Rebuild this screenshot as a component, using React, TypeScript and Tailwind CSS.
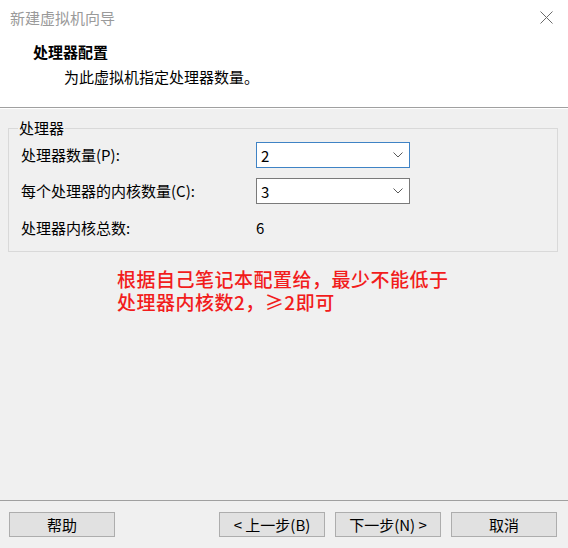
import React from "react";

function Chevron() {
  return (
    <svg width="10" height="6" viewBox="0 0 10 6" className="shrink-0">
      <path d="M0.5 0.5 L5 5 L9.5 0.5" fill="none" stroke="#5a5a5a" strokeWidth="1" />
    </svg>
  );
}

function Combo({ value, focused }: { value: string; focused?: boolean }) {
  return (
    <div
      className={`h-[26px] w-[154px] bg-white border flex items-center justify-between pl-[4px] pr-[6px] ${
        focused ? "border-[#3f83c5]" : "border-[#7a7a7a]"
      }`}
    >
      <span className="text-[15px] leading-none text-black">{value}</span>
      <Chevron />
    </div>
  );
}

function Btn({ children }: { children: React.ReactNode }) {
  return (
    <div className="h-[25px] w-[106px] bg-[#e1e1e1] border border-[#adadad] flex items-center justify-center text-[15px] text-black leading-none">
      {children}
    </div>
  );
}

export default function App() {
  return (
    <div
      className="w-[568px] h-[548px] flex flex-col bg-[#f0f0f0] overflow-hidden"
      style={{ fontFamily: '"Noto Sans CJK SC", sans-serif' }}
    >
      {/* title bar */}
      <div className="h-[34px] bg-white flex items-center justify-between pl-[10px] pr-[15px]">
        <span className="text-[15px] text-[#9a9a9a] leading-none">新建虚拟机向导</span>
        <svg width="13" height="13" viewBox="0 0 13 13">
          <path d="M0.5 0.5 L12.5 12.5 M12.5 0.5 L0.5 12.5" stroke="#6b6b6b" strokeWidth="1" fill="none" />
        </svg>
      </div>

      {/* header */}
      <div className="h-[73px] bg-white flex flex-col pt-[8px] pl-[33px]">
        <div className="text-[15px] font-bold leading-[20px] text-black">处理器配置</div>
        <div className="mt-[5px] ml-[31px] text-[15px] leading-[20px] text-black">为此虚拟机指定处理器数量。</div>
      </div>
      <div className="h-px bg-[#a0a0a0]" />
      <div className="h-px bg-white" />

      {/* body */}
      <div className="flex-1 flex flex-col pt-[9px]">
        <fieldset className="ml-[8px] mr-[10px] border border-[#d9d9d9] pl-[12px] pb-[10px]">
          <legend className="ml-[-3px] px-[1px] text-[15px] leading-[20px] text-black">处理器</legend>
          <div className="grid grid-cols-[235px_154px] gap-y-[10px] mt-[4px] items-center text-[15px] text-black">
            <span className="leading-[26px]">处理器数量(P):</span>
            <Combo value="2" focused />
            <span className="leading-[26px]">每个处理器的内核数量(C):</span>
            <Combo value="3" />
            <span className="leading-[26px] mt-[1px]">处理器内核总数:</span>
            <span className="leading-[26px] mt-[1px]">6</span>
          </div>
        </fieldset>

        <div className="mt-[15px] ml-[117px] text-[19px] tracking-[0.5px] leading-[23px] font-medium text-[#f21c1c]">
          <div>根据自己笔记本配置给，最少不能低于</div>
          <div>处理器内核数2，≥2即可</div>
        </div>

        <div className="flex-1" />
        <div className="h-px bg-[#a0a0a0]" />
        <div className="flex items-center pt-[11px] pb-[11px] pl-[9px] pr-[11px]">
          <Btn>帮助</Btn>
          <div className="flex-1" />
          <div className="flex gap-[10px]">
            <Btn>&lt; 上一步(B)</Btn>
            <Btn>下一步(N) &gt;</Btn>
            <Btn>取消</Btn>
          </div>
        </div>
      </div>
    </div>
  );
}
